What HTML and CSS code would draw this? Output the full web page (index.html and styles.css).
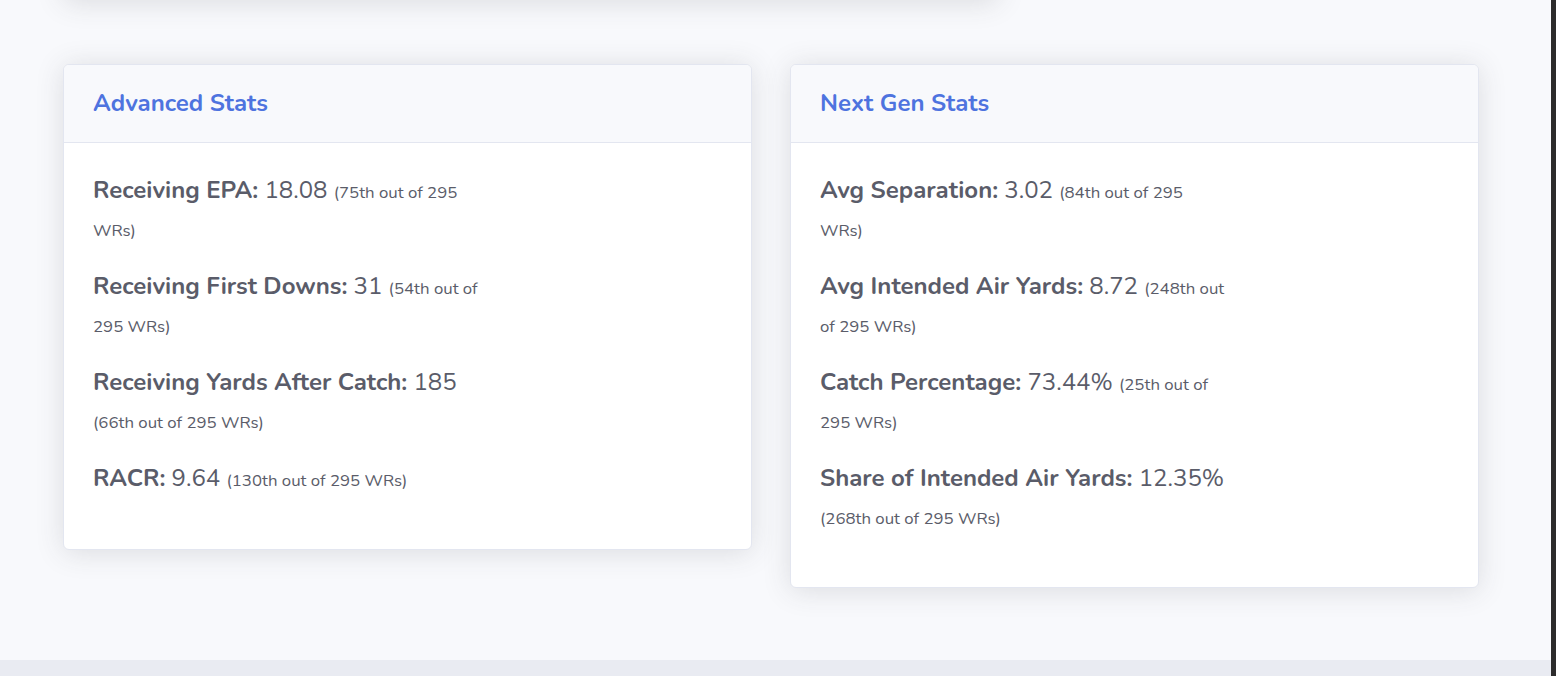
FILE: index.html
```html
<!DOCTYPE html>
<html lang="en">
<head>
<meta charset="utf-8">
<title>Player Stats</title>
<link rel="stylesheet" href="styles.css">
</head>
<body>
<div class="window">
  <div class="page">
    <div class="prev-row">
      <div class="card prev-card"></div>
    </div>
    <div class="stats-row">
      <section class="card">
        <header class="card-header"><h2 class="card-title">Advanced Stats</h2></header>
        <div class="card-body">
          <p class="stat"><b>Receiving EPA:</b> 18.08 <small>(75th out of 295 WRs)</small></p>
          <p class="stat"><b>Receiving First Downs:</b> 31 <small>(54th out of 295 WRs)</small></p>
          <p class="stat"><b>Receiving Yards After Catch:</b> 185 <small>(66th out of 295 WRs)</small></p>
          <p class="stat"><b>RACR:</b> 9.64 <small>(130th out of 295 WRs)</small></p>
        </div>
      </section>
      <section class="card">
        <header class="card-header"><h2 class="card-title">Next Gen Stats</h2></header>
        <div class="card-body">
          <p class="stat"><b>Avg Separation:</b> 3.02 <small>(84th out of 295 WRs)</small></p>
          <p class="stat"><b>Avg Intended Air Yards:</b> 8.72 <small>(248th out of 295 WRs)</small></p>
          <p class="stat"><b>Catch Percentage:</b> 73.44% <small>(25th out of 295 WRs)</small></p>
          <p class="stat"><b>Share of Intended Air Yards:</b> 12.35% <small>(268th out of 295 WRs)</small></p>
        </div>
      </section>
    </div>
    <footer class="footer"></footer>
  </div>
  <div class="scrollbar"></div>
</div>
</body>
</html>
```
FILE: styles.css
```css
html, body {
  margin: 0;
  padding: 0;
  height: 100%;
  overflow: hidden;
}
body {
  font-family: "Nunito", "Lato", "Noto Sans", sans-serif;
  color: #5a5c69;
  background: #f8f9fc;
}
.window {
  display: flex;
  height: 676px;
}
.page {
  flex: 1;
  display: flex;
  flex-direction: column;
  background: #f8f9fc;
  overflow: hidden;
}
.scrollbar {
  width: 5px;
  background: #2c2c2c;
}
.card {
  background: #fff;
  border: 1px solid #e3e6f0;
  border-radius: 6px;
  box-shadow: 0 0.15rem 1.75rem 0 rgba(58, 59, 69, 0.15);
  overflow: hidden;
}
.prev-row {
  padding-left: 63px;
  margin-top: -102px;
}
.prev-card {
  width: 933px;
  height: 100px;
}
.stats-row {
  display: grid;
  grid-template-columns: 689px 689px;
  column-gap: 38px;
  align-items: start;
  padding: 64px 0 0 63px;
  height: 660px;
  box-sizing: border-box;
  flex-shrink: 0;
}
.card-header {
  background: #f8f9fc;
  border-bottom: 1px solid #e3e6f0;
  height: 78px;
  box-sizing: border-box;
  display: flex;
  align-items: center;
  padding: 0 29px 2px;
}
.card-title {
  margin: 0;
  font-size: 24px;
  font-weight: 700;
  color: #4e73df;
}
.card-body {
  padding: 28px 29px 32px;
}
.stat {
  margin: 0 0 20px;
  max-width: 405px;
  font-size: 24px;
  line-height: 38px;
}
.stat b {
  font-weight: 700;
}
.stat small {
  font-size: 16.8px;
  line-height: 1;
}
.footer {
  flex: 1;
  background: #e9ebf2;
}
```
